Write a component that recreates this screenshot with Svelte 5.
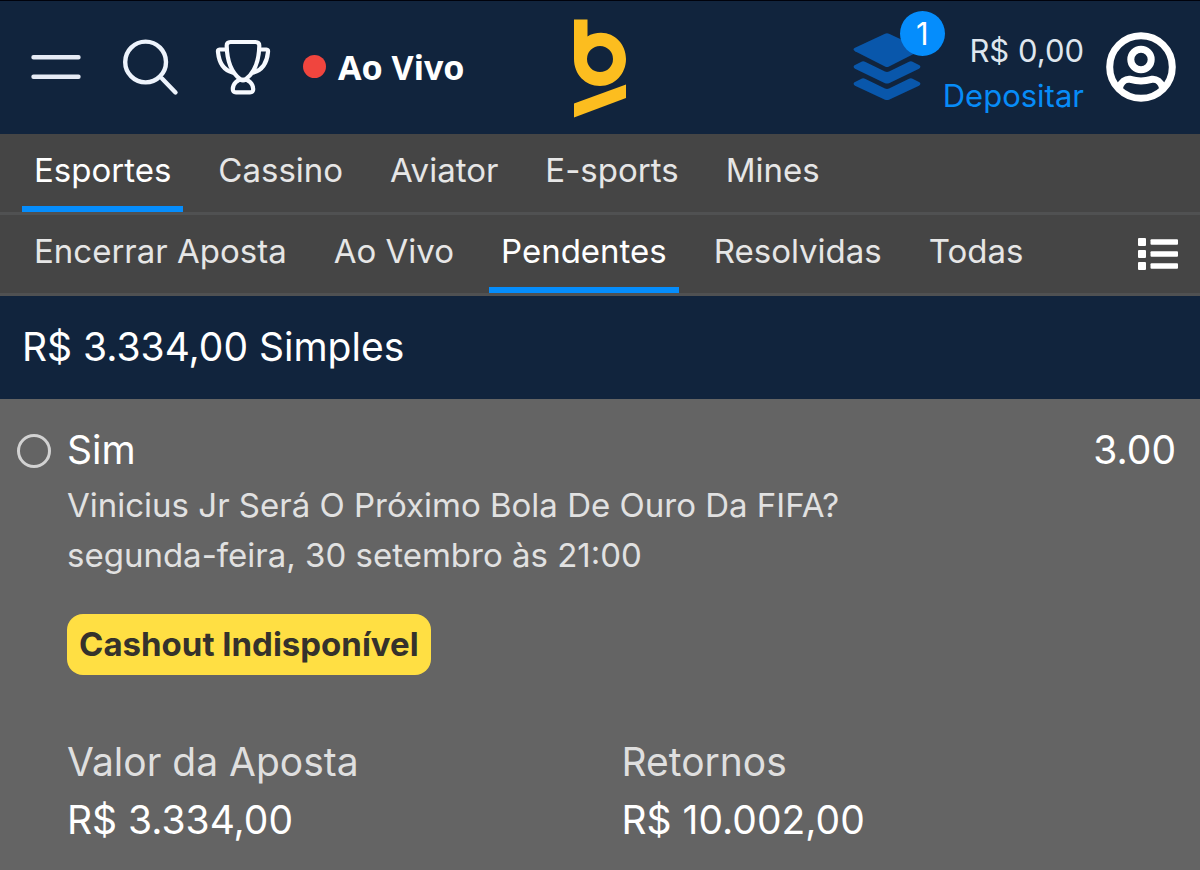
<script>
  const mainTabs = ['Esportes', 'Cassino', 'Aviator', 'E-sports', 'Mines'];
  const betTabs = ['Encerrar Aposta', 'Ao Vivo', 'Pendentes', 'Resolvidas', 'Todas'];

  let activeMain = $state('Esportes');
  let activeBets = $state('Pendentes');
</script>

<header>
  <div class="left">
    <button class="icon" aria-label="Menu">
      <svg width="50" height="58" viewBox="0 0 50 58" fill="none" stroke="#e6ebf5" stroke-width="4.4" stroke-linecap="round">
        <path d="M2.5 19.2H47.5M2.5 38.8H47.5" />
      </svg>
    </button>
    <button class="icon search" aria-label="Buscar">
      <svg width="56" height="58" viewBox="0 0 56 58" fill="none" stroke="#edf3fc" stroke-width="4.4" stroke-linecap="round">
        <circle cx="22.6" cy="24" r="20.4" />
        <path d="M39 40.5L52.5 54.5" />
      </svg>
    </button>
    <button class="icon trophy" aria-label="Campeonatos">
      <svg width="56" height="58" viewBox="0 0 56 58" fill="none" stroke="#f7faff" stroke-width="4.2" stroke-linejoin="round" stroke-linecap="round">
        <path d="M15.5 4H40.5Q44.4 4 44.3 8C44 21 40.500 34 30.500 41.500Q28 43.300 25.500 41.500C15.500 34 12 21 11.700 8Q11.600 4 15.500 4Z" />
        <path d="M11.500 11.500H4.500Q2.700 11.500 3 14C4 24.500 8.500 32 17.500 34.500M44.500 11.500H51.500Q53.300 11.500 53 14C52 24.500 47.500 32 38.500 34.500" />
        <path d="M21 54.300H35Q38.300 54.300 38.200 51C38 45.500 34 41.500 28 41.500C22 41.500 18 45.500 17.800 51Q17.700 54.300 21 54.300Z" />
      </svg>
    </button>
    <a class="live" href="/ao-vivo"><span class="dot"></span>Ao Vivo</a>
  </div>

  <a class="logo" href="/" aria-label="Início">
    <svg width="54" height="102" viewBox="0 -2 54 102" fill="#fcbd1f">
      <path fill-rule="evenodd" d="M1 1.500H14.500V18.500C18 16 23 14.800 28 14.800C42 14.800 53 26.500 53 41C53 55.500 42 68 27 68C12 68 1 56 1 41ZM27 28A13 13 0 1 0 27 54A13 13 0 1 0 27 28Z" />
      <path d="M1 85.500L53 66.500V80L1 99.500Z" />
    </svg>
  </a>

  <div class="right">
    <button class="slips" aria-label="Minhas apostas: 1">
      <svg width="68" height="68" viewBox="0 0 68 68" fill="#0957ab">
        <path d="M32 .7Q34 -.2 36 .7L66 14.800Q69 16.500 66 18.200L36 33.500Q34 34.500 32 33.500L2 18.200Q-1 16.500 2 14.800Z" />
        <path d="M9 28.500Q10.500 28 12 28.700L32 38.500Q34 39.400 36 38.500L56 28.700Q57.500 28 59 28.500L66.500 32.200Q68.500 34 66 35.700L36 50.200Q34 51 32 50.200L2 35.700Q-.5 34 1.500 32.200Z" />
        <path d="M9 45.500Q10.500 45 12 45.700L32 55.500Q34 56.400 36 55.500L56 45.700Q57.500 45 59 45.500L66.500 49.200Q68.500 51 66 52.700L36 66.700Q34 67.500 32 66.700L2 52.700Q-.5 51 1.500 49.200Z" />
      </svg>
      <span class="badge">1</span>
    </button>
    <div class="wallet">
      <span>R$ 0,00</span>
      <a href="/depositar">Depositar</a>
    </div>
    <button class="icon" aria-label="Conta">
      <svg width="70" height="70" viewBox="0 0 70 70" fill="none" stroke="#fff" stroke-width="7">
        <circle cx="35" cy="35" r="31.300" />
        <circle cx="35" cy="27.500" r="10.200" />
        <path d="M13.500 55.500C15 50 19.500 46.500 24.500 47.300C31.500 49.500 38.500 49.500 45.500 47.300C50.500 46.500 55 50 56.500 55.500" />
      </svg>
    </button>
  </div>
</header>

<nav class="tabs" aria-label="Principal">
  {#each mainTabs as tab}
    <button class:active={tab === activeMain} onclick={() => (activeMain = tab)}>{tab}</button>
  {/each}
</nav>

<nav class="tabs" aria-label="Apostas">
  {#each betTabs as tab}
    <button class:active={tab === activeBets} onclick={() => (activeBets = tab)}>{tab}</button>
  {/each}
  <button class="icon list" aria-label="Exibir lista">
    <svg width="40" height="32" viewBox="0 0 40 32" fill="#fff">
      <rect x="0" y="0" width="8" height="8" rx="1" />
      <rect x="0" y="12" width="8" height="8" rx="1" />
      <rect x="0" y="24" width="8" height="8" rx="1" />
      <rect x="12.500" y="1.200" width="27.500" height="5.600" rx="1" />
      <rect x="12.500" y="13.200" width="27.500" height="5.600" rx="1" />
      <rect x="12.500" y="25.200" width="27.500" height="5.600" rx="1" />
    </svg>
  </button>
</nav>

<main>
  <h1>R$ 3.334,00 Simples</h1>

  <article>
    <span class="ring"></span>
    <div class="bet">
      <div class="pick">
        <h2>Sim</h2>
        <span>3.00</span>
      </div>
      <p>Vinicius Jr Será O Próximo Bola De Ouro Da FIFA?</p>
      <p>segunda-feira, 30 setembro às 21:00</p>
      <span class="cashout">Cashout Indisponível</span>
      <dl>
        <div>
          <dt>Valor da Aposta</dt>
          <dd>R$ 3.334,00</dd>
        </div>
        <div>
          <dt>Retornos</dt>
          <dd>R$ 10.002,00</dd>
        </div>
      </dl>
    </div>
  </article>
</main>

<style>
  :global(body) {
    background: #646464;
    color: #fff;
    font-family: Inter, 'Liberation Sans', sans-serif;
  }

  button {
    margin: 0;
    padding: 0;
    border: 0;
    background: none;
    color: inherit;
    font: inherit;
    cursor: pointer;
  }

  a {
    color: inherit;
    text-decoration: none;
  }

  svg {
    display: block;
  }

  header {
    display: grid;
    grid-template-columns: 1fr auto 1fr;
    align-items: center;
    box-sizing: border-box;
    height: 134px;
    padding: 0 24px 2px;
    border-top: 1px solid #00020c;
    background: #11243d;
  }

  .left,
  .right {
    display: flex;
    align-items: center;
  }

  .left {
    padding-left: 7px;
  }

  .search {
    margin-left: 42px;
  }

  .trophy {
    margin-left: 36px;
  }

  .live {
    display: flex;
    align-items: center;
    gap: 12px;
    margin-left: 32px;
    font: bold 34px 'Noto Sans', 'Open Sans', sans-serif;
    white-space: nowrap;
  }

  .dot {
    width: 23px;
    height: 23px;
    border-radius: 50%;
    background: #f0453e;
  }

  .right {
    justify-content: flex-end;
    gap: 22px;
  }

  .slips {
    position: relative;
  }

  .badge {
    position: absolute;
    top: -22px;
    right: -24px;
    width: 45px;
    height: 45px;
    border-radius: 50%;
    background: #058dfc;
    font-size: 31px;
    line-height: 45px;
    text-align: center;
  }

  .wallet {
    display: flex;
    flex-direction: column;
    align-items: flex-end;
    padding-top: 12px;
    font-size: 31px;
    line-height: 45px;
    color: #dfe6ee;
    white-space: nowrap;
  }

  .wallet a {
    color: #078cf8;
  }

  .tabs {
    display: flex;
    gap: 23px;
    padding: 0 22px;
    border-bottom: 3px solid #505152;
    background: #454545;
    color: #e6e6e6;
    font-size: 33px;
    line-height: 72px;
    white-space: nowrap;
  }

  .tabs button {
    padding: 0 12px;
    border-bottom: 6px solid transparent;
  }

  .tabs .active {
    border-color: #058dfc;
    color: #fff;
  }

  .tabs .list {
    margin-left: auto;
    padding: 0;
    border: 0;
  }

  h1 {
    margin: 0;
    padding: 0 22px 2px;
    background: #11243d;
    font-size: 39px;
    font-weight: 400;
    line-height: 101px;
  }

  article {
    display: flex;
    gap: 16px;
    padding: 24px 24px 24px 17px;
  }

  .ring {
    flex: none;
    box-sizing: border-box;
    width: 34px;
    height: 34px;
    margin-top: 11px;
    border: 3px solid #d2d2d2;
    border-radius: 50%;
  }

  .bet {
    flex: 1;
  }

  .pick {
    display: flex;
    justify-content: space-between;
    padding-bottom: 3px;
    font-size: 39px;
    line-height: 54px;
  }

  h2 {
    margin: 0;
    font: inherit;
  }

  p {
    margin: 0;
    color: #e1e1e1;
    font-size: 33px;
    line-height: 50px;
  }

  .cashout {
    display: inline-block;
    margin-top: 34px;
    padding: 0 12px;
    border-radius: 16px;
    background: #ffdf43;
    color: #35322c;
    font-size: 33px;
    font-weight: 700;
    line-height: 61px;
  }

  dl {
    display: grid;
    grid-template-columns: 1fr 1fr;
    margin: 58px 0 0;
    font-size: 39px;
    line-height: 58px;
  }

  dt {
    color: #dfdfdf;
  }

  dd {
    margin: 0;
  }
</style>
